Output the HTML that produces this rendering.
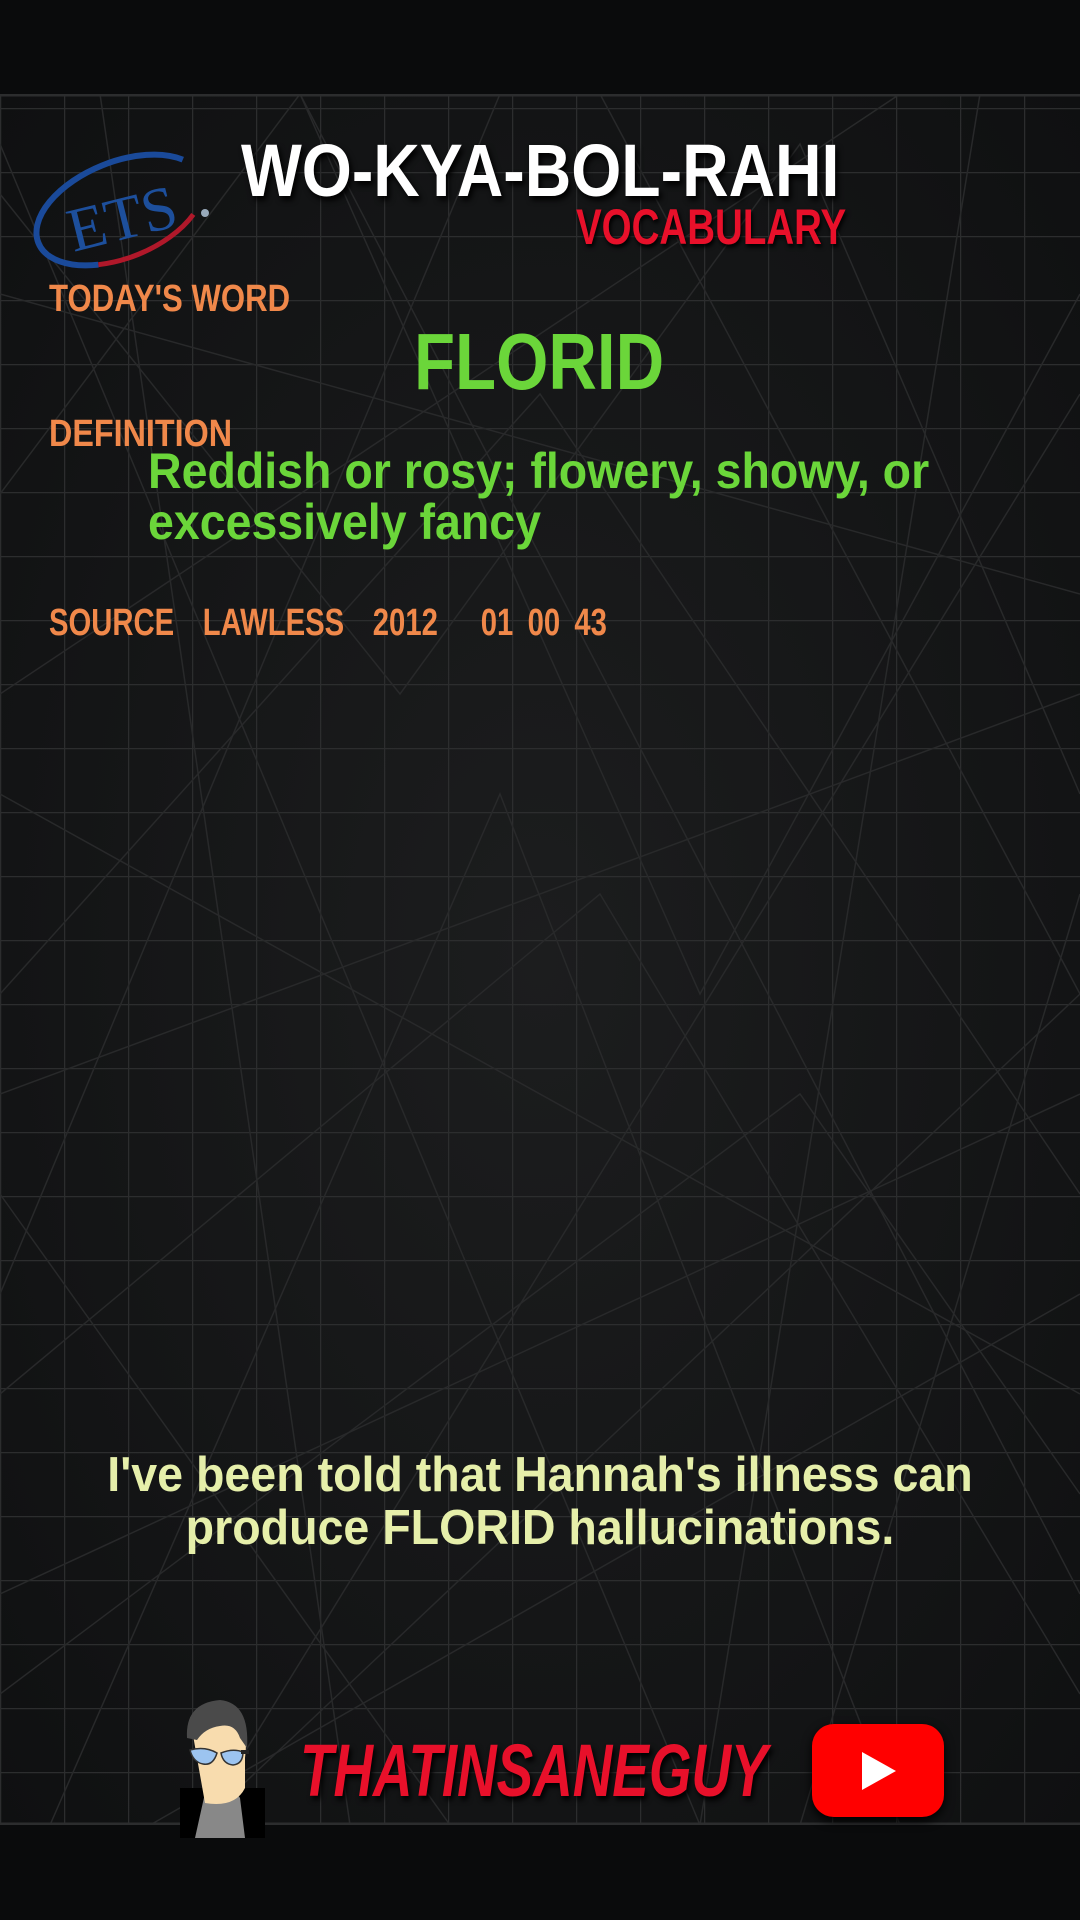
<!DOCTYPE html>
<html><head><meta charset="utf-8"><style>
*{margin:0;padding:0;box-sizing:border-box}
body{width:1080px;height:1920px;background:#0a0b0c;position:relative;overflow:hidden;font-family:"Liberation Sans",sans-serif}
#bg{position:absolute;left:0;top:94px;width:1080px;height:1731px;background:radial-gradient(ellipse at 50% 50%,#1c1d1e 0%,#131415 70%,#0f1011 100%)}
.t{position:absolute;white-space:nowrap;font-weight:bold;transform-origin:0 0}
.brush{font-family:"Liberation Sans Narrow","Liberation Sans",sans-serif;font-weight:bold}
</style></head><body>
<div id="bg"></div>
<svg width="1080" height="1731" style="position:absolute;left:0;top:94px" xmlns="http://www.w3.org/2000/svg">
<defs>
<pattern id="g" width="64" height="64" patternUnits="userSpaceOnUse" x="0" y="14">
<path d="M0 0H64M0 0V64" stroke="#2c2d2e" stroke-width="2.5" fill="none"/>
</pattern>
</defs>
<rect width="1080" height="1731" fill="url(#g)"/>
<g stroke="#28292a" stroke-width="1.5" fill="none">
<path d="M0 100L400 600L800 50L1080 700"/>
<path d="M0 400L300 0L700 900L1080 200"/>
<path d="M50 1731L500 700L900 1731"/>
<path d="M0 900L540 300L1080 1100"/>
<path d="M0 1300L600 800L1080 1600"/>
<path d="M100 0L350 1731"/>
<path d="M980 0L700 1731"/>
<path d="M0 1600L800 1000L1080 1400"/>
<path d="M200 1731L1080 900"/>
<path d="M0 700L1080 1300"/>
<path d="M0 200L1080 500"/>
<path d="M0 1100L450 1731"/>
<path d="M600 0L1080 900"/>
<path d="M0 1500L1080 1000"/>
<path d="M0 50L700 1731"/>
<path d="M1080 300L200 1731"/>
<path d="M0 600L900 0"/>
<path d="M150 1731L1080 1200"/>
<path d="M0 1000L1080 600"/>
<path d="M300 0L1080 1500"/>
<path d="M0 1200L500 0"/>
<path d="M800 1731L1080 800"/>
</g>
<line x1="0" y1="1" x2="1080" y2="1" stroke="#2c2d2e" stroke-width="3"/>
<line x1="0" y1="1730" x2="1080" y2="1730" stroke="#2c2d2e" stroke-width="3"/>
</svg>

<svg style="position:absolute;left:28px;top:145px" width="190" height="130" viewBox="0 0 190 130">
<ellipse cx="92" cy="65" rx="88" ry="48" transform="rotate(-22 92 65)" fill="none" stroke="#1a4a9a" stroke-width="6" stroke-dasharray="260 400" stroke-dashoffset="-150"/>
<ellipse cx="92" cy="65" rx="88" ry="48" transform="rotate(-22 92 65)" fill="none" stroke="#b0182a" stroke-width="5" stroke-dasharray="110 500" stroke-dashoffset="-40"/>
<text x="38" y="95" font-family="Liberation Serif,serif" font-size="62" fill="#1d4f9c" transform="rotate(-14 90 70)">ETS</text>
<circle cx="177" cy="68" r="4" fill="#9ab"/>
</svg>

<div class="t brush" style="left:241px;top:128px;font-size:74px;color:#fff;transform:scaleX(0.87);text-shadow:3px 4px 6px #000">WO-KYA-BOL-RAHI</div>
<div class="t brush" style="left:576px;top:198px;font-size:50px;color:#e8102a;transform:scaleX(0.77);text-shadow:2px 3px 5px #000">VOCABULARY</div>

<div class="t brush" style="left:49px;top:278px;font-size:38px;color:#f0884a;transform:scaleX(0.82)">TODAY'S WORD</div>
<div class="t" style="left:414px;top:316px;font-size:80px;color:#6bd63a;transform:scaleX(0.84)">FLORID</div>

<div class="t brush" style="left:49px;top:413px;font-size:38px;color:#f0884a;transform:scaleX(0.85)">DEFINITION</div>
<div class="t" style="left:148px;top:446px;font-size:50px;line-height:51px;color:#6bd63a;transform:scaleX(0.93)">Reddish or rosy; flowery, showy, or<br>excessively fancy</div>

<div class="t brush" style="left:49px;top:602px;font-size:38px;color:#f0884a;transform:scaleX(0.77);word-spacing:8px">SOURCE&nbsp; LAWLESS&nbsp; 2012 &nbsp; 01 00 43</div>

<div class="t" style="left:0;width:1080px;top:1449px;font-size:49px;line-height:53px;color:#e6efaa;text-align:center;transform:scaleX(0.95);transform-origin:540px 0">I've been told that Hannah's illness can<br>produce FLORID hallucinations.</div>

<svg style="position:absolute;left:175px;top:1698px" width="100" height="140" viewBox="0 0 100 140">
<rect x="5" y="90" width="85" height="50" fill="#000"/>
<path d="M20 140L30 95L55 85L65 100L70 140Z" fill="#888"/>
<path d="M15 20Q25 0 55 8Q75 20 70 60L70 90Q60 110 30 105L22 60Z" fill="#f8dcae"/>
<path d="M12 40Q10 5 45 2Q75 5 72 50L65 40Q60 25 45 28Q30 30 22 42Z" fill="#4a4a4a"/>
<path d="M15 52Q30 48 42 55Q38 68 28 66Q18 64 15 52ZM46 55Q58 50 68 54Q68 66 58 67Q48 66 46 55Z" fill="#9cc4f0" stroke="#333" stroke-width="1.5"/>
<rect x="66" y="52" width="8" height="4" fill="#222"/>
</svg>

<div class="t brush" style="left:300px;top:1728px;font-size:74px;color:#e8102a;transform:scaleX(0.74);font-style:italic;text-shadow:3px 4px 6px #000">THATINSANEGUY</div>

<div style="position:absolute;left:812px;top:1724px;width:132px;height:93px;background:#f00;border-radius:22px;box-shadow:0 4px 10px #000"></div>
<svg style="position:absolute;left:860px;top:1750px" width="40" height="42" viewBox="0 0 40 42"><path d="M2 2L36 21L2 40Z" fill="#fff"/></svg>
</body></html>
